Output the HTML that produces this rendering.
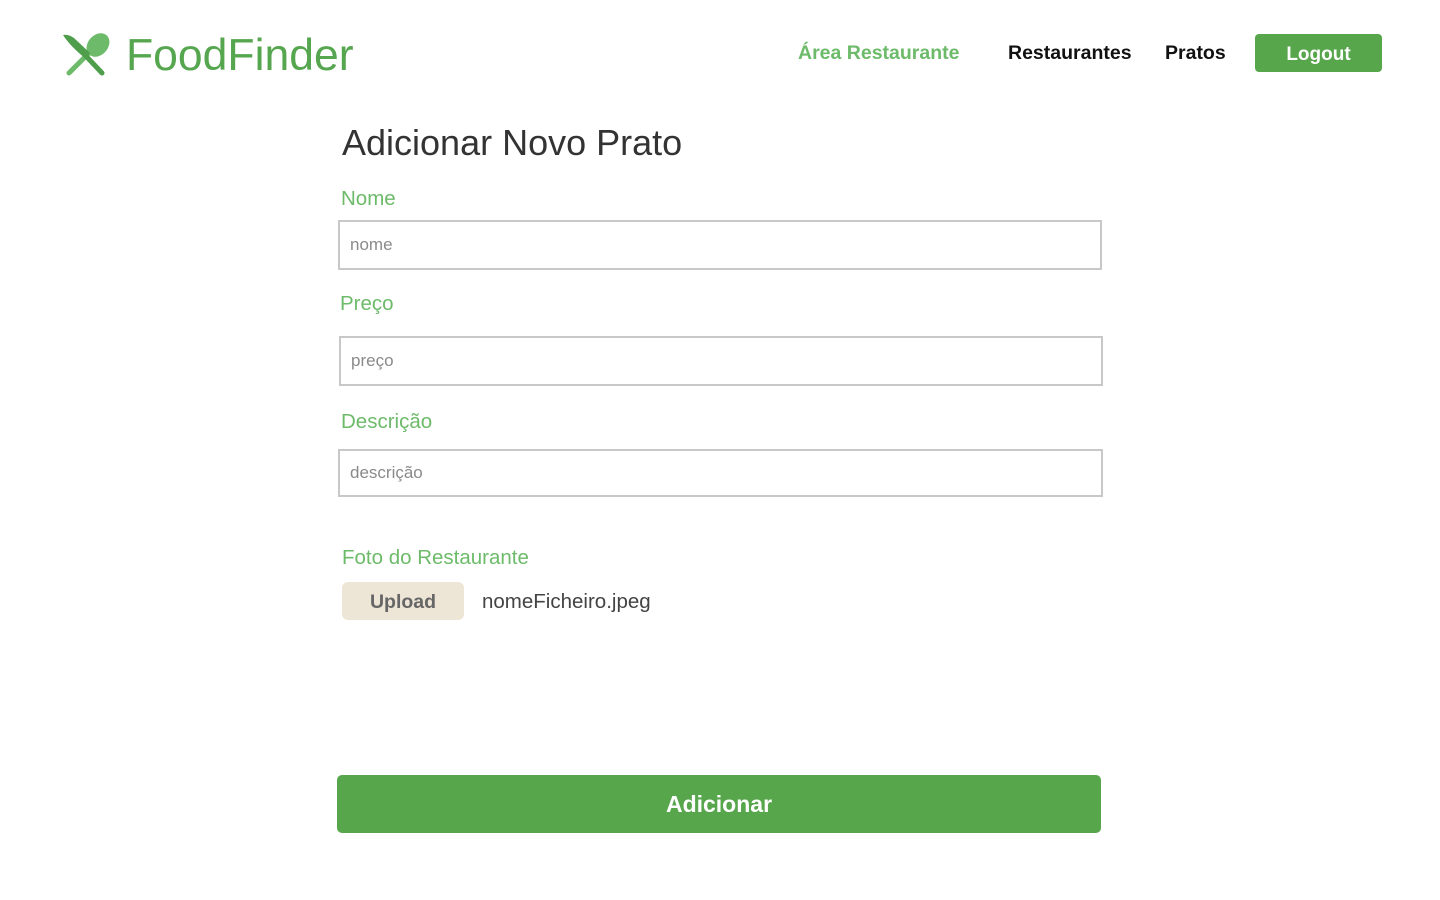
<!DOCTYPE html>
<html><head><meta charset="utf-8"><style>
*{box-sizing:border-box;margin:0;padding:0}
body{width:1440px;height:900px;background:#fff;font-family:"Liberation Sans",sans-serif;position:relative;overflow:hidden}
.abs{position:absolute}
.lbl{position:absolute;color:#6dbb6a;font-size:20.5px}
.inp{position:absolute;border:2px solid #c8c8c8;background:#fff;color:#8a8a8a;font-size:17px;padding-left:10px;display:flex;align-items:center}
</style></head><body>
<svg class="abs" style="left:60px;top:32px" width="52" height="46" viewBox="0 0 52 46">
<line x1="9" y1="41" x2="33" y2="17" stroke="#6dbb6a" stroke-width="5" stroke-linecap="round"/>
<ellipse cx="38" cy="13" rx="10" ry="13" transform="rotate(42 38 13)" fill="#6dbb6a"/>
<path d="M3 3 Q8 2 14 6 L30 21 L26 27 Q10 14 3 3 Z" fill="#4f9e4b"/>
<line x1="25" y1="23" x2="42" y2="41" stroke="#4f9e4b" stroke-width="5" stroke-linecap="round"/>
</svg>
<div class="abs" style="left:126px;top:31px;font-size:44.5px;color:#55a64e">FoodFinder</div>
<div class="abs" style="left:798px;top:42px;font-size:19.5px;font-weight:bold;color:#6dbb6a">Área Restaurante</div>
<div class="abs" style="left:1008px;top:42px;font-size:19.5px;font-weight:bold;color:#111">Restaurantes</div>
<div class="abs" style="left:1165px;top:42px;font-size:19.5px;font-weight:bold;color:#111">Pratos</div>
<div class="abs" style="left:1255px;top:34px;width:127px;height:38px;background:#57a64c;border-radius:4px;color:#fff;font-weight:bold;font-size:19px;display:flex;align-items:center;justify-content:center;padding-top:3px">Logout</div>
<div class="abs" style="left:342px;top:122px;font-size:36px;color:#333">Adicionar Novo Prato</div>
<div class="lbl" style="left:341px;top:187px">Nome</div>
<div class="inp" style="left:338px;top:220px;width:764px;height:50px">nome</div>
<div class="lbl" style="left:340px;top:292px">Preço</div>
<div class="inp" style="left:339px;top:336px;width:764px;height:50px">preço</div>
<div class="lbl" style="left:341px;top:410px">Descrição</div>
<div class="inp" style="left:338px;top:449px;width:765px;height:48px">descrição</div>
<div class="lbl" style="left:342px;top:546px">Foto do Restaurante</div>
<div class="abs" style="left:342px;top:582px;width:122px;height:38px;background:#ede5d6;border-radius:6px;color:#666;font-weight:bold;font-size:19.5px;display:flex;align-items:center;justify-content:center;padding-top:3px">Upload</div>
<div class="abs" style="left:482px;top:590px;font-size:20.5px;color:#444">nomeFicheiro.jpeg</div>
<div class="abs" style="left:337px;top:775px;width:764px;height:58px;background:#57a64c;border-radius:5px;color:#fff;font-weight:bold;font-size:23px;display:flex;align-items:center;justify-content:center">Adicionar</div>
</body></html>
